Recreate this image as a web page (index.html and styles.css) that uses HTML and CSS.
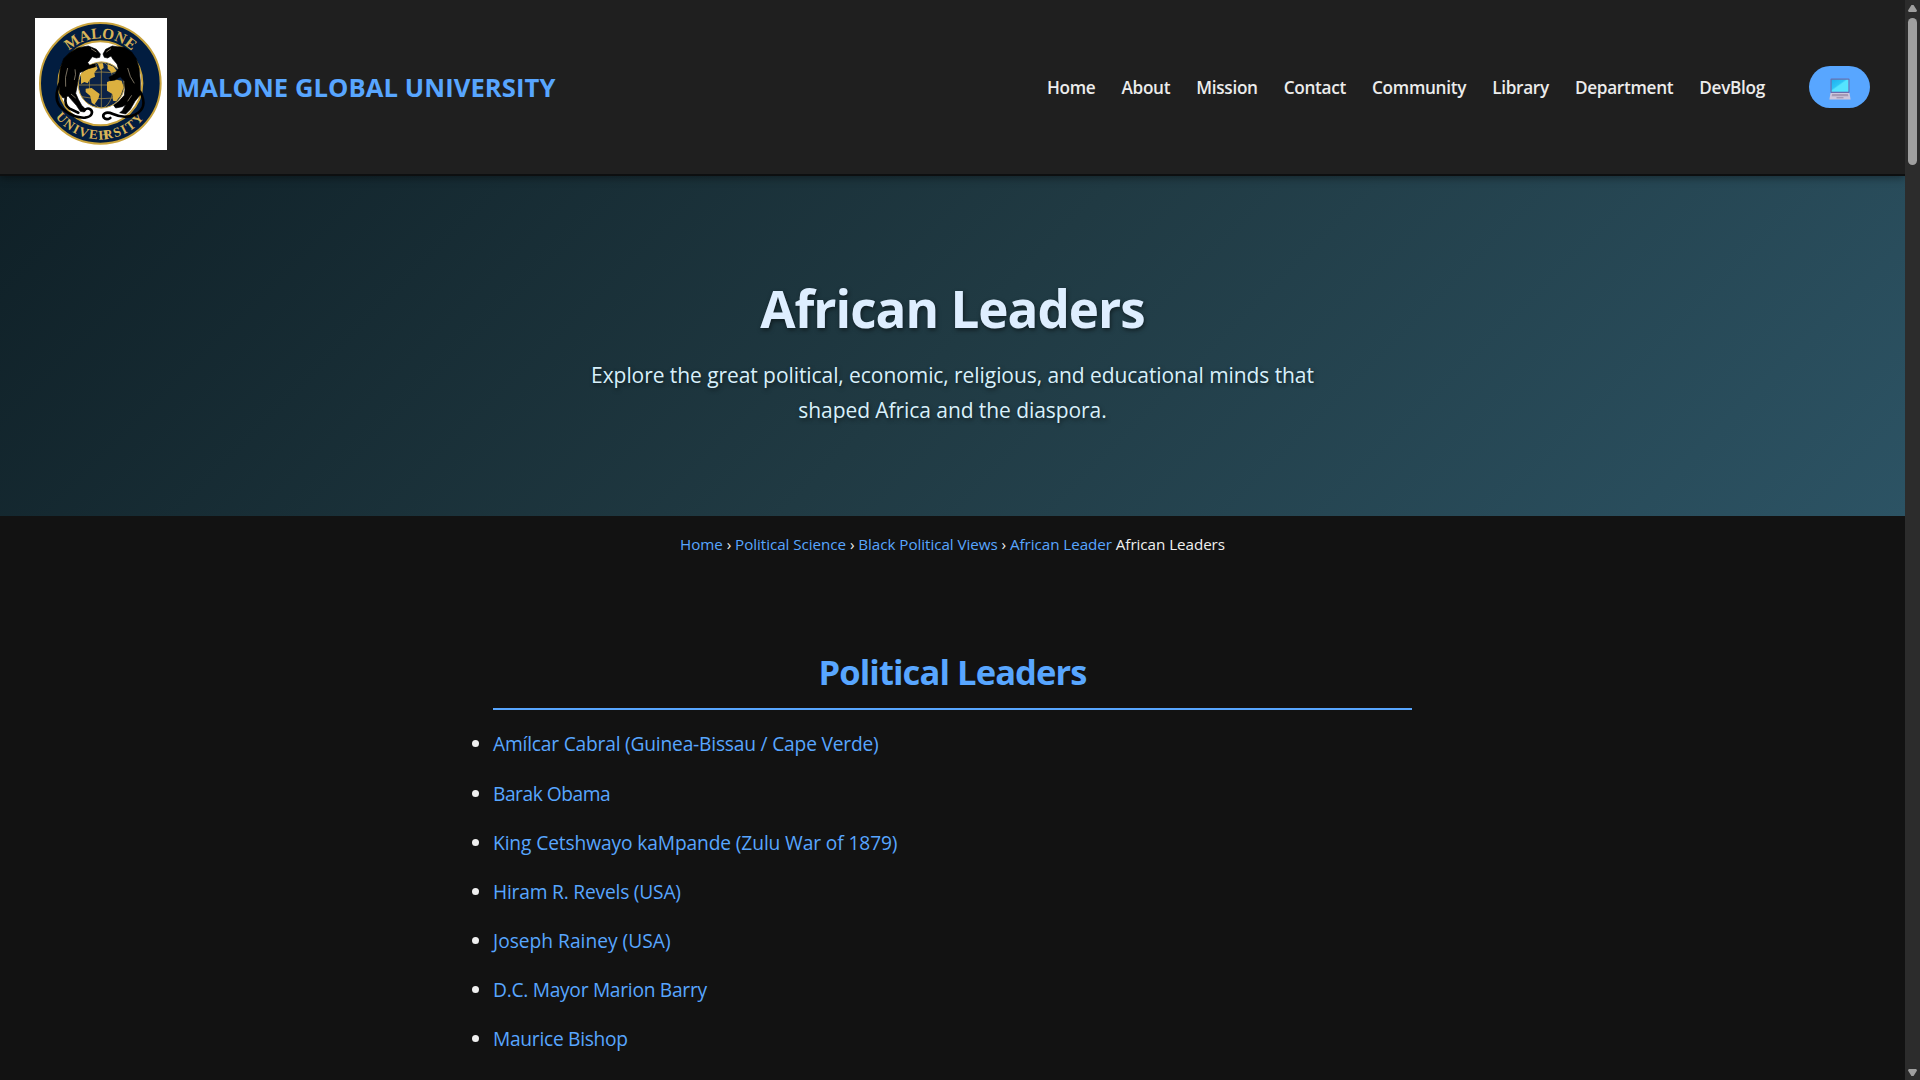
FILE: index.html
```html
<!DOCTYPE html>
<html lang="en">
<head>
<meta charset="utf-8">
<title>African Leaders</title>
<link rel="stylesheet" href="styles.css">
</head>
<body>
<div class="page">
<header class="site-header">
  <div class="brand">
    <svg class="logo" viewBox="0 0 396 396" role="img" aria-label="Malone University seal">
      <defs>
        <path id="arc-top" d="M61 196a135 135 0 0 1 270 0"/>
        <path id="arc-bottom" d="M28 196a168 168 0 0 0 336 0"/>
      </defs>
      <rect width="396" height="396" fill="#fff"/>
      <circle cx="196" cy="196" r="181" fill="#021d40" stroke="#c9a33c" stroke-width="6"/>
      <circle cx="196" cy="196" r="126" fill="#fff" stroke="#c9a33c" stroke-width="6"/>
      <g class="seal-text">
        <text text-anchor="middle"><textPath href="#arc-top" startOffset="50%">MALONE</textPath></text>
        <text class="seal-small" text-anchor="middle"><textPath href="#arc-bottom" startOffset="50%">UNIVE<tspan>H</tspan><tspan dx="-20">R</tspan>SITY</textPath></text>
      </g>
      <circle cx="199" cy="201" r="69" fill="#0b2246" stroke="#caa84a" stroke-width="3"/>
      <g fill="none" stroke="#b99a45" stroke-width="2">
        <path d="M199 132v138M130 201h138M140 168q59-12 118 0M140 236q59 12 118 0"/>
        <ellipse cx="199" cy="201" rx="36" ry="69"/>
      </g>
      <g fill="#dcb03f">
        <path d="M138 168l18-18 26-10 6 12-10 12 2 12-14 6-8 14-10-4-10 6z"/>
        <path d="M152 212l18-2 24 18-4 14-12 18-8-6-4-20-14-12z"/>
        <path d="M188 136l16 0 2 14-10 6z"/>
        <path d="M216 192l22-8 22 4 6 20-8 22-14 20-10-2-2-20-16-10z"/>
        <path d="M218 138l18 8 10 14-16 4-12-12z"/>
      </g>
      <g fill="#000" stroke="#000" stroke-width="2" stroke-linejoin="round">
        <path d="M147 86L160 84 184 94 196 108 194 118 184 120 172 116 166 124 158 134 164 142 180 138 182 146 160 152 134 164 130 184 126 206 122 226 130 244 140 262 152 274 148 282 136 280 124 262 108 244 100 234 84 240 74 226 72 190 76 150 86 122 104 104 128 90z"/>
        <path d="M246 86L232 84 212 94 204 108 208 118 218 120 228 114 234 124 246 138 250 152 240 168 222 178 226 188 240 186 256 176 268 190 270 214 268 232 252 250 236 262 242 270 262 266 272 260 262 278 254 284 272 288 286 274 300 250 316 230 316 190 312 150 304 122 290 102 268 88z"/>
      </g>
      <g fill="none" stroke="#000" stroke-linecap="round" stroke-width="8">
        <path d="M74 196C56 240 66 262 90 278C116 298 134 300 150 299C174 296 174 280 166 274C160 270 152 272 148 277"/>
        <path d="M316 222C336 260 322 278 300 290C272 302 252 296 234 288C210 278 202 290 206 298C212 306 220 304 226 300"/>
        <path d="M92 238q-4 24 12 34l26 12"/>
      </g>
      <g fill="none" stroke="#b3a890" stroke-width="2">
        <path d="M98 150q-10 28-6 56M118 186q6-18 2-32M278 150q6 28 20 46M108 228l14 12M290 232l-12 18M168 92l16 10M228 92l-14 10"/>
      </g>
    </svg>
    <span class="brand-name">MALONE GLOBAL UNIVERSITY</span>
  </div>
  <nav class="main-nav">
    <a>Home</a><a>About</a><a>Mission</a><a>Contact</a><a>Community</a><a>Library</a><a>Department</a><a>DevBlog</a>
    <button class="theme-toggle" aria-label="Theme">
      <svg viewBox="0 0 22 22" width="22" height="22">
        <defs><linearGradient id="screen" x1="0" y1="0" x2="1" y2="1"><stop offset="0" stop-color="#1fb0ee"/><stop offset=".4" stop-color="#2cc4f6"/><stop offset=".48" stop-color="#55e4ff"/><stop offset="1" stop-color="#55e4ff"/></linearGradient></defs>
        <rect x="1.500" y="0.500" width="19" height="14.500" rx="1" fill="#6a6cae"/>
        <rect x="2.600" y="1.700" width="16.800" height="12" fill="url(#screen)"/>
        <path d="M1.500 15h19l1.100 6.500H.4z" fill="#cdc6dc"/>
        <path d="M3.200 16h15.600l.6 2.300H2.600z" fill="#a59ab5"/>
        <path d="M7.500 19h7v1.400h-7z" fill="#a59ab5"/>
      </svg>
    </button>
  </nav>
</header>
<section class="hero">
  <h1>African Leaders</h1>
  <p>Explore the great political, economic, religious, and educational minds that<br>shaped Africa and the diaspora.</p>
</section>
<div class="breadcrumbs"><a>Home</a> › <a>Political Science</a> › <a>Black Political Views</a> › <a>African Leader</a> African Leaders</div>
<main class="content">
  <h2>Political Leaders</h2>
  <ul>
    <li><a>Amílcar Cabral (Guinea-Bissau / Cape Verde)</a></li>
    <li><a>Barak Obama</a></li>
    <li><a>King Cetshwayo kaMpande (Zulu War of 1879)</a></li>
    <li><a>Hiram R. Revels (USA)</a></li>
    <li><a>Joseph Rainey (USA)</a></li>
    <li><a>D.C. Mayor Marion Barry</a></li>
    <li><a>Maurice Bishop</a></li>
  </ul>
</main>
</div>
<div class="scrollbar"><i class="up"></i><i class="thumb"></i><i class="down"></i></div>
</body>
</html>
```
FILE: styles.css
```css
* { box-sizing: border-box; margin: 0; padding: 0; }
html, body { height: 100%; overflow: hidden; }
body {
  display: flex;
  background: #121212;
  color: #f0f0f0;
  font-family: "Open Sans", "Noto Sans", sans-serif;
}
.page { flex: 1; height: 1080px; overflow: hidden; }
.site-header {
  position: relative;
  display: flex;
  justify-content: space-between;
  align-items: center;
  height: 176px;
  padding: 0 35px;
  background: #1f1f1f;
  border-bottom: 2px solid #0d0f10;
  box-shadow: 0 2px 8px rgba(0, 0, 0, 0.4);
}
.brand { display: flex; align-items: center; gap: 9px; }
.logo { width: 132px; height: 132px; margin-bottom: 6px; }
.seal-text { font-family: "Liberation Serif", serif; font-size: 46px; font-weight: bold; fill: #d8b458; }
.seal-small { font-size: 40px; letter-spacing: 4.5px; }
.brand-name { color: #58a6ff; font-size: 25.6px; font-weight: 700; letter-spacing: 0.08px; }
.main-nav { display: flex; align-items: center; gap: 26px; color: #ececec; font-size: 17.2px; font-weight: 600; letter-spacing: -0.3px; }
.theme-toggle {
  display: flex;
  align-items: center;
  justify-content: center;
  width: 61px;
  height: 42px;
  margin-left: 18px;
  padding-top: 3px;
  border: 0;
  border-radius: 21px;
  background: #58a6ff;
}
.hero {
  height: 340px;
  padding-top: 96px;
  background: linear-gradient(135deg, #0f2027, #203a43, #2c5364);
  text-align: center;
  text-shadow: 1px 2px 4px rgba(0, 0, 0, 0.5);
}
.hero h1 { color: #deeeff; font-size: 51.2px; line-height: 72px; font-weight: 700; letter-spacing: -1px; }
.hero p { margin-top: 14px; color: #d8f0fb; font-size: 21px; line-height: 35.2px; letter-spacing: -0.07px; }
.breadcrumbs { padding-top: 15px; text-align: center; font-size: 15.2px; line-height: 26px; letter-spacing: -0.05px; }
.breadcrumbs a, .content a { color: #58a6ff; }
.content { width: 919px; margin: 85px auto 0; }
.content h2 {
  height: 68px;
  border-bottom: 2px solid #58a6ff;
  color: #58a6ff;
  font-size: 34.5px;
  line-height: 60px;
  letter-spacing: -0.9px;
  text-align: center;
}
.content ul { margin-top: 9.4px; list-style: none; }
.content li { display: flex; align-items: center; height: 49.15px; font-size: 19.2px; letter-spacing: -0.2px; }
.content li:nth-child(2) { letter-spacing: -0.48px; }
.content li:nth-child(3) { letter-spacing: -0.12px; }
.content li:nth-child(5) { letter-spacing: 0; }
.content li:nth-child(n+6) { letter-spacing: -0.28px; }
.content li::before {
  content: "";
  width: 7px;
  height: 7px;
  margin: 0 14px 0 -21px;
  border-radius: 50%;
  background: #f0f0f0;
}
.scrollbar {
  display: flex;
  flex-direction: column;
  align-items: center;
  width: 15px;
  height: 1080px;
  padding: 5px 0 4px;
  background: #2c2c2c;
}
.up, .down { width: 9px; height: 7px; background: #9f9f9f; }
.up { clip-path: polygon(38% 0, 62% 0, 100% 80%, 92% 100%, 8% 100%, 0 80%); }
.down { margin-top: auto; clip-path: polygon(8% 0, 92% 0, 100% 20%, 62% 100%, 38% 100%, 0 20%); }
.thumb { width: 9px; height: 147px; margin-top: 6px; border-radius: 5px; background: #9f9f9f; }
```
